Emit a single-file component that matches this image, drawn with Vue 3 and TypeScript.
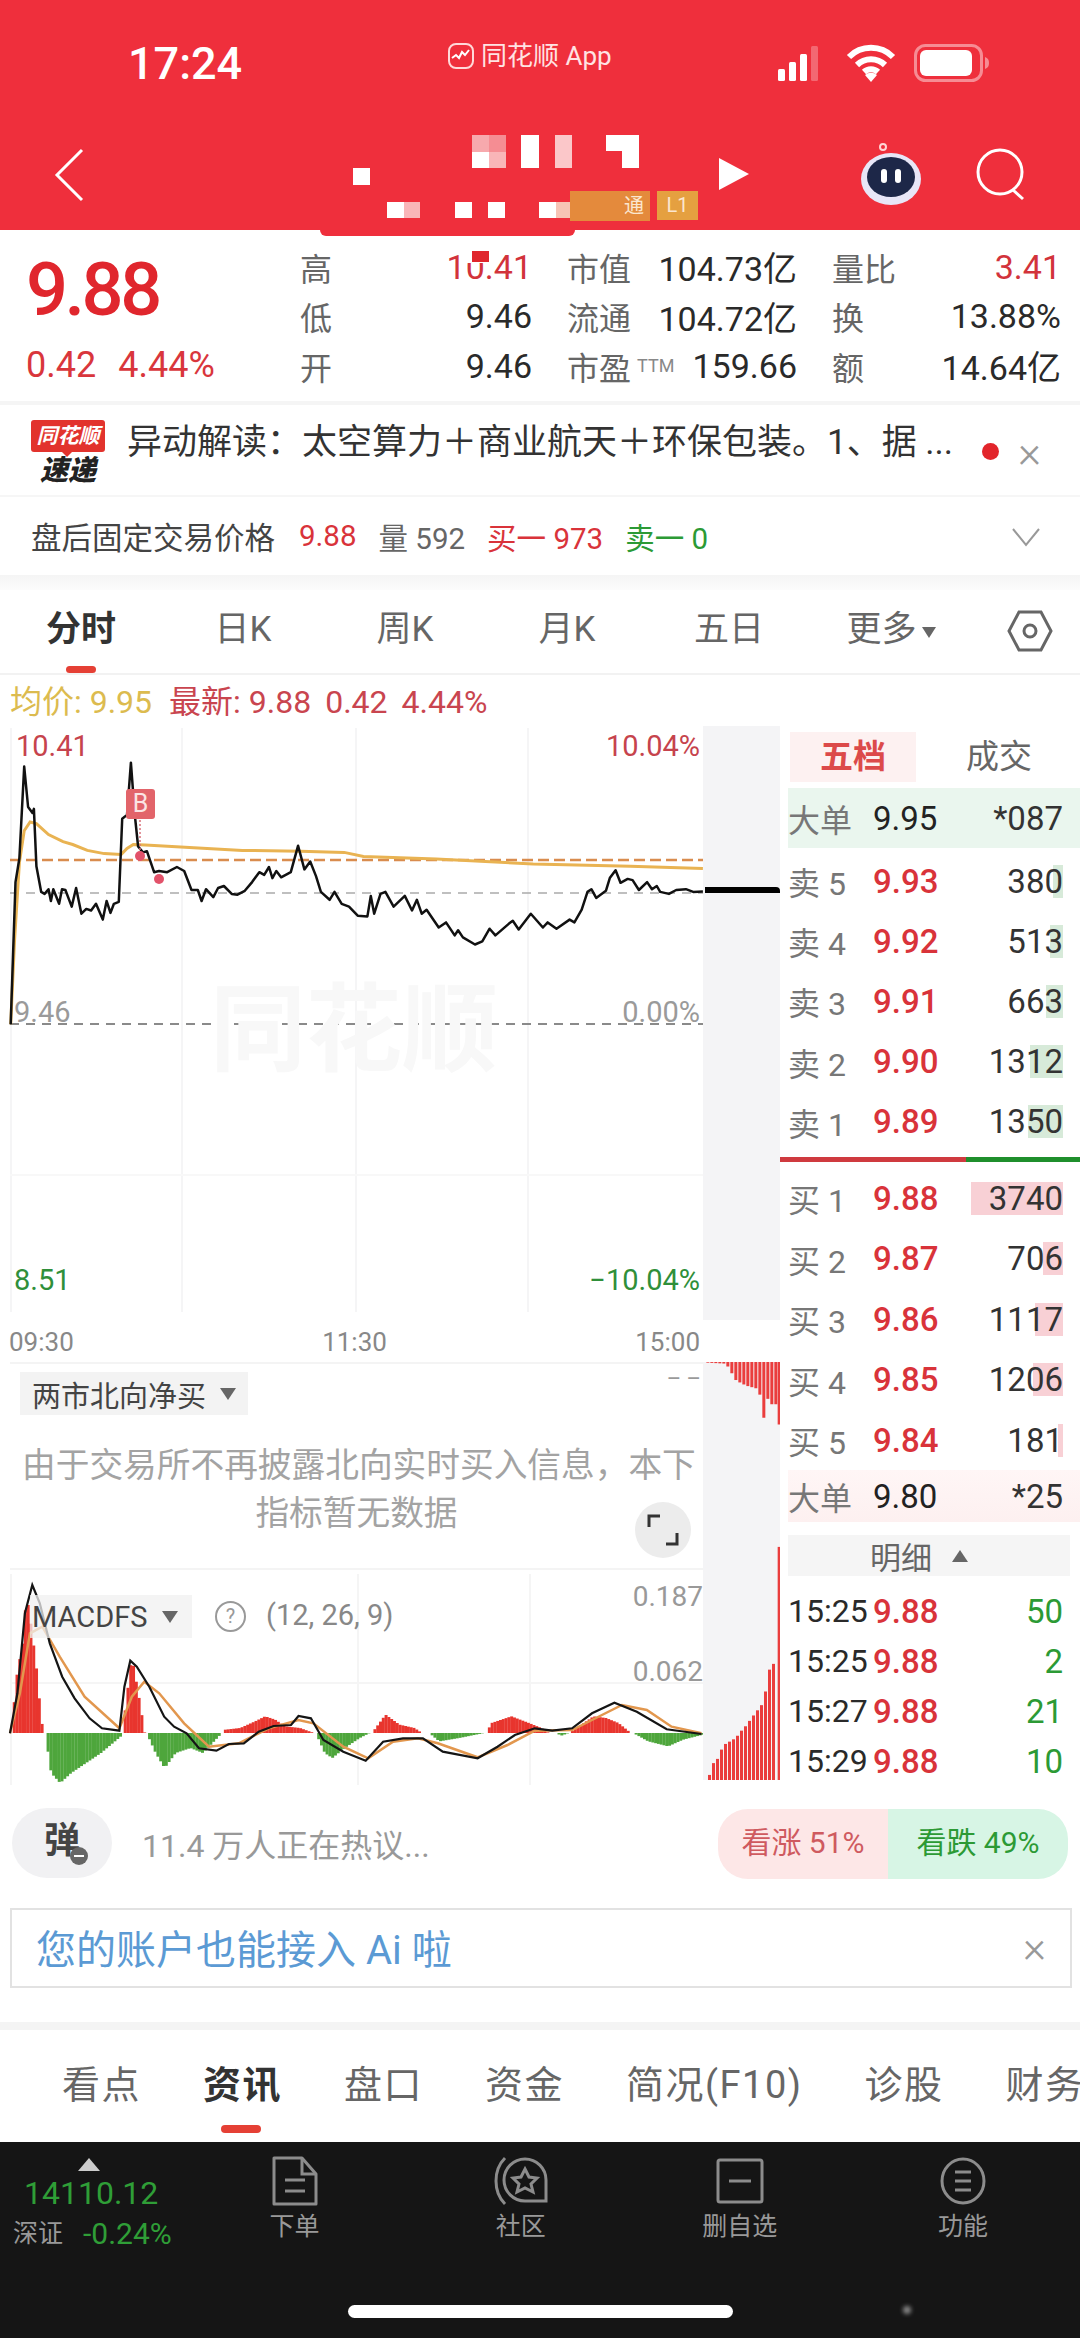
<template>
  <div class="app">
    <header class="top">
      <div class="status">
        <span class="clock">17:24</span>
        <span class="origin">
          <svg class="origin-icon" width="28" height="28" viewBox="0 0 28 28">
            <rect x="2" y="2" width="24" height="24" rx="7" fill="none" stroke="#ffd9d9" stroke-width="2" />
            <path d="M5 16l4-3 3 3 3-6 3 3 4-5" fill="none" stroke="#fff" stroke-width="2" />
          </svg>
          同花顺 App
        </span>
        <span class="status-icons">
          <svg width="50" height="36" viewBox="0 0 50 36">
            <rect x="0" y="24" width="7" height="12" rx="1.5" fill="#fff" />
            <rect x="11" y="17" width="7" height="19" rx="1.5" fill="#fff" />
            <rect x="22" y="9" width="7" height="27" rx="1.5" fill="#fff" />
            <rect x="33" y="1" width="7" height="35" rx="1.5" fill="#fff" opacity="0.28" />
          </svg>
          <svg width="50" height="38" viewBox="0 0 50 38">
            <path d="M3 13a31 31 0 0 1 44 0M11 21a20 20 0 0 1 28 0M18 28a10 10 0 0 1 14 0" fill="none" stroke="#fff" stroke-width="6" />
            <path d="M25 38l-6-7a9 9 0 0 1 12 0z" fill="#fff" />
          </svg>
          <svg width="76" height="38" viewBox="0 0 76 38">
            <rect x="1.5" y="1.5" width="66" height="35" rx="10" fill="none" stroke="#fff" stroke-opacity="0.45" stroke-width="3" />
            <rect x="6" y="6" width="52" height="26" rx="6" fill="#fff" />
            <path d="M71 13c3 1 4 3 4 6s-1 5-4 6z" fill="#fff" fill-opacity="0.45" />
          </svg>
        </span>
      </div>
      <div class="nav">
        <svg class="back" width="34" height="54" viewBox="0 0 34 54">
          <path d="M30 2L5 27l25 25" fill="none" stroke="#fff" stroke-width="3" />
        </svg>
        <svg class="mosaic" width="370" height="90" viewBox="0 0 370 90">
          <rect v-for="(b, i) in mosaic" :key="i" :x="b[0]" :y="b[1]" :width="b[2]" :height="b[3]" :fill="b[4]" />
        </svg>
        <span class="level-a">通</span>
        <span class="level-b">L1</span>
        <svg class="play" width="32" height="34" viewBox="0 0 32 34">
          <path d="M1 1l30 16L1 33z" fill="#fff" />
        </svg>
        <svg class="robot" width="66" height="66" viewBox="0 0 66 66">
          <circle cx="25" cy="5" r="3" fill="none" stroke="#ffd5d5" stroke-width="2" />
          <ellipse cx="33" cy="37" rx="30" ry="26" fill="#e8e6f7" />
          <ellipse cx="33" cy="35" rx="24" ry="20" fill="#1d2748" />
          <rect x="23" y="27" width="6" height="14" rx="3" fill="#fff" />
          <rect x="37" y="27" width="6" height="14" rx="3" fill="#fff" />
        </svg>
        <svg class="search" width="54" height="54" viewBox="0 0 54 54">
          <circle cx="25" cy="25" r="22" fill="none" stroke="#fff" stroke-width="3" />
          <path d="M38 43l10 9" stroke="#fff" stroke-width="3" />
        </svg>
      </div>
      <div class="notch"></div>
    </header>

    <section class="quote">
      <div class="price-box">
        <div class="big">9.88</div>
        <div class="change"><span>0.42</span><span>4.44%</span></div>
      </div>
      <div class="stats">
        <div v-for="s in stats" :key="s.label" class="stat">
          <span class="stat-label">{{ s.label }}<small v-if="s.tag">{{ s.tag }}</small></span>
          <span class="stat-value" :class="{ red: s.red, masked: s.masked }">{{ s.value }}</span>
        </div>
      </div>
    </section>

    <section class="notice">
      <div class="brand">
        <div class="bubble">同花顺</div>
        <div class="brand-sub">速递</div>
      </div>
      <p class="notice-text">异动解读：太空算力＋商业航天＋环保包装。1、据 ...</p>
      <i class="notice-dot"></i>
      <span class="close">×</span>
    </section>

    <section class="after-hours">
      <span class="ah-title">盘后固定交易价格</span>
      <span class="red">9.88</span>
      <span class="ah-gray">量 592</span>
      <span class="red">买一 973</span>
      <span class="green">卖一 0</span>
      <svg class="chevron" width="30" height="20" viewBox="0 0 30 20">
        <path d="M2 2l13 16L28 2" fill="none" stroke="#999" stroke-width="2" />
      </svg>
    </section>

    <div class="band"></div>

    <nav class="periods">
      <span v-for="(p, i) in periods" :key="p" class="period" :class="{ active: i === 0 }">
        {{ p }}<i v-if="p === '更多'" class="more-caret"></i>
      </span>
      <svg class="hex" width="46" height="42" viewBox="0 0 46 42">
        <path d="M12 2h22l10 19-10 19H12L2 21z" fill="none" stroke="#666" stroke-width="3" />
        <circle cx="23" cy="21" r="6" fill="none" stroke="#666" stroke-width="3" />
      </svg>
    </nav>

    <div class="avg-row">
      <span class="yellow">均价: 9.95</span>
      <span class="avg-red">最新: 9.88</span>
      <span class="avg-red">0.42</span>
      <span class="avg-red">4.44%</span>
    </div>

    <main class="main">
      <div class="charts">
        <div class="chart-row price-row">
          <div class="canvas">
            <svg width="703" height="600" viewBox="0 0 703 600">
              <line v-for="x in priceGrid" :key="x" :x1="x" :x2="x" y1="8" y2="592" stroke="#f5f5f6" stroke-width="2" />
              <line x1="10" x2="703" y1="455" y2="455" stroke="#f8f8f8" stroke-width="2" />
              <line x1="10" x2="703" y1="173" y2="173" stroke="#aaa" stroke-width="1.5" stroke-dasharray="9 7" />
              <line x1="10" x2="703" y1="304" y2="304" stroke="#8a8a8a" stroke-width="2" stroke-dasharray="9 7" />
              <line x1="10" x2="703" y1="140" y2="140" stroke="#d98c4e" stroke-width="2.5" stroke-dasharray="11 5" />
              <polyline :points="avgLine" fill="none" stroke="#e9b352" stroke-width="3" />
              <polyline :points="priceLine" fill="none" stroke="#111" stroke-width="2.5" stroke-linejoin="round" />
              <line x1="140" x2="140" y1="100" y2="135" stroke="#d9707a" stroke-width="1.5" stroke-dasharray="2 2" />
              <circle cx="140" cy="136" r="5" fill="#e2526a" />
              <circle cx="159" cy="159" r="5" fill="#e2526a" />
            </svg>
            <span class="watermark">同花顺</span>
            <span class="b-mark">B</span>
            <span class="lab tl red-soft">10.41</span>
            <span class="lab tr red-soft">10.04%</span>
            <span class="lab ml gray-soft">9.46</span>
            <span class="lab mr gray-soft">0.00%</span>
            <span class="lab bl green-soft">8.51</span>
            <span class="lab br green-soft">−10.04%</span>
          </div>
          <div class="strip">
            <i class="tick"></i>
          </div>
        </div>

        <div class="axis">
          <span>09:30</span><span>11:30</span><span>15:00</span>
        </div>

        <div class="chart-row lower">
          <div class="panels">
            <div class="north">
              <div class="tag">两市北向净买<i class="caret"></i></div>
              <span class="dash">– –</span>
              <p class="no-data first">由于交易所不再披露北向实时买入信息，本下</p>
              <p class="no-data">指标暂无数据</p>
              <span class="expand">
                <svg width="34" height="34" viewBox="0 0 34 34">
                  <path d="M3 14V3h11M31 20v11H20" fill="none" stroke="#333" stroke-width="3" />
                </svg>
              </span>
            </div>
            <div class="macd">
              <svg width="703" height="215" viewBox="0 0 703 215">
                <line v-for="x in macdGrid" :key="x" :x1="x" :x2="x" y1="4" y2="215" stroke="#f5f5f5" stroke-width="2" />
                <line x1="10" x2="703" y1="113" y2="113" stroke="#f5f5f5" stroke-width="2" />
                <rect
                  v-for="(b, i) in macdBars"
                  :key="i"
                  :x="b.x"
                  :y="b.y"
                  width="3"
                  :height="b.h"
                  :fill="b.up ? '#e8352e' : '#4ea63c'"
                />
                <polyline :points="macdSlow" fill="none" stroke="#e2974e" stroke-width="2.5" />
                <polyline :points="macdFast" fill="none" stroke="#151515" stroke-width="2.2" />
              </svg>
              <div class="tag macd-tag">MACDFS<i class="caret"></i></div>
              <span class="help">?</span>
              <span class="params">(12, 26, 9)</span>
              <span class="macd-num n1">0.187</span>
              <span class="macd-num n2">0.062</span>
            </div>
          </div>
          <div class="strip">
            <svg width="77" height="420" viewBox="0 0 77 420">
              <rect v-for="(b, i) in volBars" :key="i" :x="b.x" :y="b.y" width="3" :height="b.h" fill="#ea3d3d" />
            </svg>
          </div>
        </div>
      </div>

      <aside class="book">
        <div class="book-tabs">
          <span class="on">五档</span>
          <span>成交</span>
        </div>
        <div class="row big-row sell-big">
          <span class="r-label green">大单</span>
          <span class="r-price dark">9.95</span>
          <span class="r-vol">*087</span>
        </div>
        <div v-for="r in sells" :key="r.label" class="row">
          <span class="r-label">{{ r.label }}</span>
          <span class="r-price">{{ r.price }}</span>
          <span class="r-vol">
            <i class="vol-bar green-bar" :style="{ width: r.bar + 'px' }"></i>
            <b>{{ r.vol }}</b>
          </span>
        </div>
        <div class="split"></div>
        <div v-for="r in buys" :key="r.label" class="row buy">
          <span class="r-label">{{ r.label }}</span>
          <span class="r-price">{{ r.price }}</span>
          <span class="r-vol">
            <i class="vol-bar red-bar" :style="{ width: r.bar + 'px' }"></i>
            <b>{{ r.vol }}</b>
          </span>
        </div>
        <div class="row big-row buy-big">
          <span class="r-label red">大单</span>
          <span class="r-price dark">9.80</span>
          <span class="r-vol">*25</span>
        </div>
        <div class="detail-head">明细<i class="up-caret"></i></div>
        <div v-for="(d, i) in details" :key="i" class="detail">
          <span class="d-time">{{ d.time }}</span>
          <span class="r-price">9.88</span>
          <span class="r-vol green">{{ d.vol }}</span>
        </div>
      </aside>
    </main>

    <section class="talk">
      <div class="danmu">弹<i></i></div>
      <span class="talk-text">11.4 万人正在热议...</span>
      <div class="votes">
        <span class="vote up">看涨 51%</span>
        <span class="vote down">看跌 49%</span>
      </div>
    </section>

    <section class="ai">
      <span>您的账户也能接入 Ai 啦</span>
      <span class="close">×</span>
    </section>

    <div class="band low"></div>

    <nav class="info-tabs">
      <span v-for="(t, i) in infoTabs" :key="t" class="info-tab" :class="{ active: i === 1 }">{{ t }}</span>
    </nav>

    <footer class="bar">
      <div class="index">
        <i class="index-up"></i>
        <div class="index-num">14110.12</div>
        <div class="index-sub"><span>深证</span><em>-0.24%</em></div>
      </div>
      <div class="action">
        <svg width="46" height="50" viewBox="0 0 46 50">
          <path d="M2 2h28l14 16v30H2z" fill="none" stroke="#8c8c8c" stroke-width="3" stroke-linejoin="round" />
          <path d="M30 2v16h14M13 24h20M13 35h20" fill="none" stroke="#8c8c8c" stroke-width="3" />
        </svg>
        <span>下单</span>
      </div>
      <div class="action">
        <svg width="54" height="50" viewBox="0 0 54 50">
          <path d="M11 2C-1 14-1 36 11 48" fill="none" stroke="#8c8c8c" stroke-width="3" />
          <path d="M31 3a21 21 0 0 1 21 21v21H31a21 21 0 0 1 0-42z" fill="none" stroke="#8c8c8c" stroke-width="3" />
          <path d="M31 13l4 8 8 1-6 6 2 8-8-4-8 4 2-8-6-6 8-1z" fill="none" stroke="#8c8c8c" stroke-width="3" />
        </svg>
        <span>社区</span>
      </div>
      <div class="action">
        <svg width="48" height="46" viewBox="0 0 48 46">
          <rect x="2" y="2" width="44" height="42" rx="2" fill="none" stroke="#8c8c8c" stroke-width="3" />
          <path d="M13 23h22" stroke="#8c8c8c" stroke-width="3" />
        </svg>
        <span>删自选</span>
      </div>
      <div class="action">
        <svg width="46" height="48" viewBox="0 0 46 48">
          <ellipse cx="23" cy="24" rx="21" ry="22" fill="none" stroke="#8c8c8c" stroke-width="3" />
          <path d="M15 15h16M15 24h16M15 33h16" stroke="#8c8c8c" stroke-width="3" />
        </svg>
        <span>功能</span>
      </div>
      <i class="smudge"></i>
      <i class="home"></i>
    </footer>
  </div>
</template>

<script setup lang="ts">
type P = [number, number]

// coordinates read off the enlarged crops, scaled down when drawn
const toPrice = (a: P[]) => a.map(([x, y]) => `${(x / 2.063).toFixed(1)},${(y / 2.53).toFixed(1)}`).join(' ')
const toMacd = (a: P[]) => a.map(([x, y]) => `${(x / 2.01).toFixed(1)},${(y / 3 - 250).toFixed(1)}`).join(' ')

const priceLine = toPrice([
  [22, 770], [32, 410], [40, 350], [50, 118], [58, 220], [67, 235], [70, 225], [75, 370], [85, 435], [92, 440],
  [100, 428], [105, 458], [110, 428], [122, 465], [128, 428], [135, 430], [148, 472], [157, 425], [168, 490],
  [178, 478], [188, 482], [198, 465], [212, 505], [220, 458], [228, 488], [235, 465], [245, 460], [252, 250],
  [262, 240], [270, 108], [278, 240], [285, 320], [295, 335], [303, 332], [318, 385], [328, 382], [345, 385],
  [365, 372], [380, 382], [395, 430], [408, 430], [416, 458], [425, 428], [440, 448], [450, 425], [462, 420],
  [478, 440], [490, 442], [505, 432], [520, 410], [535, 385], [545, 392], [555, 372], [562, 400], [570, 382],
  [580, 398], [600, 385], [615, 318], [628, 378], [640, 358], [652, 395], [662, 435], [680, 455], [690, 435],
  [705, 465], [720, 472], [738, 495], [758, 497], [765, 445], [772, 490], [785, 440], [795, 435], [812, 472],
  [835, 445], [850, 482], [860, 455], [870, 490], [880, 480], [905, 525], [920, 512], [938, 545], [945, 532],
  [955, 550], [980, 568], [995, 560], [1010, 528], [1022, 545], [1050, 515], [1058, 508], [1070, 530], [1095, 490],
  [1120, 525], [1130, 512], [1148, 528], [1175, 505], [1185, 512], [1200, 480], [1212, 435], [1220, 428], [1230, 450],
  [1250, 432], [1258, 400], [1270, 380], [1280, 412], [1295, 402], [1305, 405], [1318, 430], [1335, 410], [1345, 428],
  [1355, 420], [1362, 435], [1380, 440], [1395, 430], [1415, 428], [1430, 435], [1450, 434]
])

const avgLine = toPrice([
  [22, 770], [30, 560], [40, 360], [50, 280], [62, 258], [75, 262], [100, 290], [130, 308], [150, 315], [180, 330],
  [215, 338], [250, 340], [262, 325], [275, 315], [300, 316], [400, 323], [500, 330], [620, 332], [710, 335],
  [750, 345], [900, 352], [1100, 364], [1300, 370], [1450, 376]
])

const macdFast = toMacd([
  [20, 1240], [35, 1120], [50, 880], [65, 795], [80, 850], [100, 970], [125, 1070], [150, 1135], [180, 1195],
  [205, 1225], [240, 1232], [250, 1100], [262, 1022], [275, 1040], [300, 1100], [330, 1190], [350, 1220], [375, 1240],
  [400, 1285], [435, 1292], [460, 1272], [490, 1270], [520, 1235], [550, 1218], [585, 1215], [600, 1188], [625, 1195],
  [650, 1260], [690, 1295], [735, 1322], [770, 1265], [810, 1255], [850, 1255], [890, 1295], [960, 1315], [1000, 1280],
  [1035, 1245], [1075, 1225], [1110, 1232], [1150, 1225], [1190, 1180], [1235, 1148], [1280, 1175], [1340, 1228], [1410, 1242]
])

const macdSlow = toMacd([
  [20, 1240], [40, 1120], [60, 940], [85, 920], [120, 1010], [170, 1130], [240, 1225], [265, 1130], [290, 1085],
  [320, 1120], [370, 1210], [420, 1280], [480, 1270], [540, 1225], [600, 1200], [630, 1210], [690, 1280], [740, 1315],
  [790, 1265], [840, 1255], [880, 1270], [960, 1312], [1020, 1275], [1075, 1232], [1150, 1230], [1190, 1200],
  [1250, 1155], [1300, 1170], [1350, 1220], [1410, 1240]
])

function lerp(env: P[], step: number): P[] {
  const out: P[] = []
  for (let x = env[0][0]; x <= env[env.length - 1][0]; x += step) {
    const i = Math.max(env.findIndex(p => p[0] >= x), 1)
    const [x0, y0] = env[i - 1]
    const [x1, y1] = env[i]
    out.push([x, y0 + ((y1 - y0) * (x - x0)) / (x1 - x0 || 1)])
  }
  return out
}

const macdEnv: P[][] = [
  [[20, 0], [30, 165], [45, 290], [50, 420], [60, 320], [70, 200], [80, 40], [85, 0]],
  [[88, 0], [100, -120], [118, -150], [140, -120], [170, -90], [200, -60], [240, -10]],
  [[243, 0], [262, 230], [275, 120], [288, 0]],
  [[292, 0], [310, -60], [328, -105], [350, -60], [380, -45], [405, -60], [440, -5]],
  [[450, 10], [480, 15], [510, 35], [530, 50], [550, 40], [570, 20], [600, 15], [628, 0]],
  [[632, 0], [650, -60], [665, -75], [690, -45], [720, -15], [740, 0]],
  [[745, 0], [772, 55], [800, 25], [830, 15], [845, 0]],
  [[860, 0], [880, -25], [920, -15], [970, 0]],
  [[975, 0], [985, 30], [1025, 50], [1060, 30], [1085, 15], [1100, 0]],
  [[1115, 0], [1125, -8], [1140, 0]],
  [[1142, 0], [1190, 50], [1215, 45], [1240, 30], [1265, 0]],
  [[1270, 0], [1300, -25], [1340, -40], [1370, -20], [1410, -5]]
]

const macdBars = macdEnv.flatMap(env =>
  lerp(env, 5.6).map(([x, v]) => {
    const h = Math.abs(v) / 3
    return { x: x / 2.01, y: v > 0 ? 163 - h : 163, h, up: v > 0 }
  })
)

// strip bars: the top group hangs from the edge, the bottom group stands on it
const hanging: P[] = [
  ...lerp([[80, 2], [135, 5], [150, 30], [165, 55], [195, 70], [225, 78], [238, 100], [241, 165], [254, 165], [257, 105], [272, 125], [288, 125]], 12),
  [294, 185]
]
const standing: P[] = [
  ...lerp([[85, 15], [97, 50], [108, 60], [118, 85], [130, 105], [165, 125], [175, 140], [190, 155], [205, 175], [220, 195], [240, 220], [250, 235], [260, 325], [275, 330], [283, 385]], 12),
  [294, 690]
]
const volBars = [
  ...hanging.map(([x, h]) => ({ x: (x - 70) / 3, y: 0, h: h / 2.96 })),
  ...standing.map(([x, h]) => ({ x: (x - 70) / 3, y: 418 - h / 2.96, h: h / 2.96 }))
]

const priceGrid = [11, 182, 356, 528]
const macdGrid = [11, 358, 530]

const mosaic: [number, number, number, number, string][] = [
  [124, 0, 17, 17, '#f7a9ad'], [141, 0, 17, 17, '#f58d93'], [124, 17, 17, 16, '#fff'], [141, 17, 17, 16, '#f9b5b8'],
  [173, 0, 18, 33, '#fff'], [207, 0, 17, 33, '#fbc7c9'], [258, 0, 33, 16, '#fff'], [274, 16, 17, 17, '#fff'],
  [5, 33, 17, 17, '#fff'], [39, 67, 17, 16, '#fff'], [56, 67, 16, 16, '#f9b5b8'], [107, 67, 17, 16, '#fff'],
  [140, 67, 17, 16, '#fff'], [191, 67, 17, 16, '#fff'], [208, 67, 16, 16, '#f7c3b5']
]

const stats = [
  { label: '高', value: '10.41', red: true, masked: true },
  { label: '市值', value: '104.73亿' },
  { label: '量比', value: '3.41', red: true },
  { label: '低', value: '9.46' },
  { label: '流通', value: '104.72亿' },
  { label: '换', value: '13.88%' },
  { label: '开', value: '9.46' },
  { label: '市盈', tag: 'TTM', value: '159.66' },
  { label: '额', value: '14.64亿' }
]

const periods = ['分时', '日K', '周K', '月K', '五日', '更多']

const sells = [
  { label: '卖 5', price: '9.93', vol: '380', bar: 10 },
  { label: '卖 4', price: '9.92', vol: '513', bar: 13 },
  { label: '卖 3', price: '9.91', vol: '663', bar: 17 },
  { label: '卖 2', price: '9.90', vol: '1312', bar: 33 },
  { label: '卖 1', price: '9.89', vol: '1350', bar: 35 }
]

const buys = [
  { label: '买 1', price: '9.88', vol: '3740', bar: 92 },
  { label: '买 2', price: '9.87', vol: '706', bar: 20 },
  { label: '买 3', price: '9.86', vol: '1117', bar: 28 },
  { label: '买 4', price: '9.85', vol: '1206', bar: 30 },
  { label: '买 5', price: '9.84', vol: '181', bar: 5 }
]

const details = [
  { time: '15:25', vol: '50' },
  { time: '15:25', vol: '2' },
  { time: '15:27', vol: '21' },
  { time: '15:29', vol: '10' }
]

const infoTabs = ['看点', '资讯', '盘口', '资金', '简况(F10)', '诊股', '财务']
</script>

<style>
html,
body {
  margin: 0;
  background: #fff;
}
</style>

<style scoped>
.app {
  width: 1080px;
  height: 2338px;
  overflow: hidden;
  background: #fff;
  color: #333;
  font-family: Roboto, "Noto Sans CJK SC", sans-serif;
}

.top {
  position: relative;
  height: 230px;
  background: #ef2f3c;
  color: #fff;
}

.status {
  position: relative;
  height: 120px;
}

.clock {
  position: absolute;
  left: 128px;
  top: 37px;
  font-size: 45px;
  font-weight: 500;
  line-height: 54px;
}

.origin {
  position: absolute;
  left: 447px;
  top: 38px;
  display: flex;
  align-items: center;
  gap: 6px;
  font-size: 26px;
  line-height: 36px;
  color: #ffe3e3;
}

.status-icons {
  position: absolute;
  left: 778px;
  top: 44px;
  display: flex;
  align-items: center;
  gap: 18px;
}

.nav {
  position: relative;
  height: 110px;
}

.back {
  position: absolute;
  left: 52px;
  top: 28px;
}

.mosaic {
  position: absolute;
  left: 348px;
  top: 15px;
}

.level-a {
  position: absolute;
  left: 570px;
  top: 71px;
  width: 80px;
  height: 30px;
  padding-right: 6px;
  box-sizing: border-box;
  background: #e48a3c;
  color: #fbe6cf;
  font-size: 20px;
  line-height: 30px;
  text-align: right;
}

.level-b {
  position: absolute;
  left: 657px;
  top: 71px;
  width: 41px;
  height: 29px;
  background: #e5a040;
  color: #fbe6cf;
  font-size: 20px;
  line-height: 29px;
  text-align: center;
}

.play {
  position: absolute;
  left: 718px;
  top: 37px;
}

.robot {
  position: absolute;
  left: 858px;
  top: 22px;
}

.search {
  position: absolute;
  left: 975px;
  top: 27px;
}

.notch {
  position: absolute;
  left: 320px;
  top: 230px;
  width: 255px;
  height: 6px;
  background: #ef2f3c;
  border-radius: 0 0 6px 6px;
}

.quote {
  display: flex;
  height: 175px;
  box-sizing: border-box;
  border-bottom: 4px solid #f5f5f5;
}

.price-box {
  width: 300px;
  padding-left: 26px;
  box-sizing: border-box;
  color: #e0262d;
}

.big {
  margin-top: 20px;
  font-size: 74px;
  font-weight: 500;
  line-height: 80px;
  letter-spacing: -3.5px;
}

.change {
  display: flex;
  gap: 22px;
  margin-top: 15px;
  font-size: 36px;
  line-height: 40px;
  color: #d9363c;
}

.stats {
  display: grid;
  grid-template-columns: 232px 230px 229px;
  grid-auto-rows: 49.5px;
  column-gap: 35px;
  padding-top: 12px;
}

.stat {
  display: flex;
  align-items: center;
  justify-content: space-between;
}

.stat-label {
  font-size: 32px;
  color: #666;
}

.stat-label small {
  margin-left: 6px;
  vertical-align: 8px;
  font-size: 18px;
  color: #888;
}

.stat-value {
  position: relative;
  font-size: 34px;
  color: #2a2a2a;
}

.stat-value.red {
  color: #d2333b;
}

/* the smear left on the day high in the reference */
.stat-value.masked::before {
  content: "";
  position: absolute;
  left: 14px;
  top: 6px;
  width: 25px;
  height: 10px;
  background: #fff;
}

.stat-value.masked::after {
  content: "";
  position: absolute;
  left: 25px;
  top: 4px;
  width: 17px;
  height: 11px;
  background: #e0262d;
}

.red {
  color: #d9333a;
}

.green {
  color: #2c9a35;
}

.notice {
  display: flex;
  align-items: flex-start;
  height: 92px;
  padding-left: 31px;
  box-sizing: border-box;
  position: relative;
  border-bottom: 2px solid #f6f6f6;
}

.brand {
  width: 74px;
  margin-top: 15px;
}

.bubble {
  position: relative;
  height: 32px;
  background: #e2332d;
  border-radius: 3px;
  color: #fff;
  font-size: 21px;
  font-style: italic;
  font-weight: 700;
  line-height: 32px;
  text-align: center;
}

.bubble::after {
  content: "";
  position: absolute;
  left: 30px;
  bottom: -5px;
  border-top: 6px solid #e2332d;
  border-left: 6px solid transparent;
  border-right: 6px solid transparent;
}

.brand-sub {
  margin-top: 3px;
  color: #222;
  font-size: 28px;
  font-style: italic;
  font-weight: 900;
  line-height: 32px;
  text-align: center;
}

.notice-text {
  margin: 16px 0 0 22px;
  font-size: 35px;
  line-height: 44px;
  color: #333;
  white-space: nowrap;
}

.notice-dot {
  position: absolute;
  left: 982px;
  top: 38px;
  width: 17px;
  height: 17px;
  border-radius: 50%;
  background: #e2252b;
}

.close {
  color: #999;
  font-size: 44px;
  font-weight: 300;
  line-height: 44px;
}

.notice .close {
  position: absolute;
  left: 1018px;
  top: 25px;
}

.after-hours {
  position: relative;
  display: flex;
  align-items: center;
  gap: 22px;
  height: 78px;
  padding-left: 31px;
  box-sizing: border-box;
  font-size: 29.5px;
}

.ah-title {
  font-size: 30.5px;
  margin-right: 2px;
  color: #444;
}

.ah-gray {
  color: #666;
}

.chevron {
  position: absolute;
  left: 1011px;
  top: 30px;
}

.band {
  height: 15px;
  background: linear-gradient(#f5f5f5, #fcfcfc);
}

.band.low {
  height: 8px;
  margin-top: 34px;
  background: #f4f4f4;
}

.periods {
  position: relative;
  display: flex;
  height: 85px;
  box-sizing: border-box;
  border-bottom: 2px solid #f2f2f2;
}

.period {
  position: relative;
  width: 162px;
  text-align: center;
  font-size: 35px;
  line-height: 80px;
  color: #666;
}

.period.active {
  color: #333;
  font-weight: 700;
}

.period.active::after {
  content: "";
  position: absolute;
  left: 66px;
  bottom: 0;
  width: 30px;
  height: 7px;
  border-radius: 4px;
  background: #e54035;
}

.more-caret {
  display: inline-block;
  margin-left: 5px;
  vertical-align: 3px;
  border-top: 11px solid #666;
  border-left: 7px solid transparent;
  border-right: 7px solid transparent;
}

.hex {
  position: absolute;
  left: 1007px;
  top: 20px;
}

.avg-row {
  display: flex;
  gap: 14px;
  height: 45px;
  padding: 7px 0 0 10px;
  box-sizing: border-box;
  font-size: 32px;
  line-height: 40px;
}

.yellow {
  color: #dcbb4f;
  margin-right: 3px;
}

.avg-red {
  color: #c9454f;
}

.main {
  display: flex;
  height: 1065px;
}

.charts {
  width: 780px;
  height: 1060px;
}

.chart-row {
  display: flex;
}

.price-row {
  height: 600px;
}

.canvas {
  position: relative;
  width: 703px;
}

.strip {
  width: 77px;
  background: #f4f4f6;
  position: relative;
}

.price-row .strip {
  margin-top: 6px;
}

.tick {
  position: absolute;
  left: 2px;
  top: 161px;
  width: 75px;
  height: 6px;
  background: #000;
  border-radius: 0 4px 0 0;
}

.watermark {
  position: absolute;
  left: 210px;
  top: 250px;
  font-size: 96px;
  font-weight: 700;
  line-height: 120px;
  color: #f8f8f8;
}

.b-mark {
  position: absolute;
  left: 126px;
  top: 69px;
  width: 29px;
  height: 30px;
  border-radius: 3px;
  background: #e2646a;
  color: #fbe4e4;
  font-size: 25px;
  line-height: 30px;
  text-align: center;
}

.lab {
  position: absolute;
  font-size: 29px;
  line-height: 36px;
}

.tl { left: 16px; top: 8px; }
.tr { right: 3px; top: 8px; }
.ml { left: 14px; top: 274px; }
.mr { right: 3px; top: 274px; }
.bl { left: 14px; top: 542px; }
.br { right: 3px; top: 542px; }

.red-soft { color: #c6434d; }
.gray-soft { color: #9a9a9a; }
.green-soft { color: #2f8f3a; }

.axis {
  display: flex;
  justify-content: space-between;
  width: 703px;
  height: 42px;
  padding: 0 3px 0 9px;
  box-sizing: border-box;
  font-size: 26px;
  line-height: 44px;
  color: #888;
}

.lower {
  height: 418px;
}

.panels {
  width: 703px;
}

.north {
  position: relative;
  height: 208px;
  box-sizing: border-box;
  border: solid #f4f4f4;
  border-width: 2px 0;
  margin-left: 10px;
}

.tag {
  display: inline-flex;
  align-items: center;
  height: 43px;
  padding: 0 12px;
  background: #f3f3f3;
  color: #444;
  font-size: 29px;
}

.north .tag {
  margin: 8px 0 0 10px;
}

.caret {
  margin-left: 14px;
  border-top: 12px solid #666;
  border-left: 8px solid transparent;
  border-right: 8px solid transparent;
}

.dash {
  position: absolute;
  right: 2px;
  top: 2px;
  color: #999;
  font-size: 22px;
}

.no-data {
  margin: 0;
  font-size: 33.7px;
  line-height: 48px;
  color: #a3a3a3;
  text-align: center;
  white-space: nowrap;
}

.no-data.first {
  margin: 27px 0 0 12px;
  text-align: left;
}

.expand {
  position: absolute;
  left: 625px;
  top: 138px;
  display: flex;
  align-items: center;
  justify-content: center;
  width: 56px;
  height: 56px;
  border-radius: 50%;
  background: #ececec;
}

.macd {
  position: relative;
  height: 210px;
}

.macd svg {
  display: block;
}

.macd-tag {
  position: absolute;
  left: 30px;
  top: 25px;
  height: 43px;
  padding: 0 14px 0 2px;
  background: rgba(240, 240, 240, 0.75);
}

.help {
  position: absolute;
  left: 215px;
  top: 31px;
  width: 27px;
  height: 27px;
  border: 2px solid #999;
  border-radius: 50%;
  color: #999;
  font-size: 20px;
  line-height: 27px;
  text-align: center;
}

.params {
  position: absolute;
  left: 266px;
  top: 27px;
  color: #888;
  font-size: 29px;
  line-height: 36px;
}

.macd-num {
  position: absolute;
  right: 0;
  color: #999;
  font-size: 28px;
  line-height: 36px;
}

.n1 { top: 9px; }
.n2 { top: 84px; }

.book {
  width: 300px;
  padding-left: 8px;
  box-sizing: border-box;
}

.book-tabs {
  display: flex;
  height: 68px;
  font-size: 33px;
  line-height: 74px;
  color: #666;
}

.book-tabs span {
  flex: none;
  width: 126px;
  margin-right: 20px;
  text-align: center;
}

.book-tabs .on {
  height: 50px;
  margin-top: 12px;
  line-height: 50px;
  margin-left: 2px;
  background: #fdf1f1;
  color: #dc4a4a;
  font-weight: 700;
}

.row,
.detail {
  display: flex;
  align-items: center;
  height: 60.2px;
  font-size: 33px;
}

.big-row.sell-big {
  height: 60px;
  margin-bottom: 3px;
  background: #eaf6ee;
}

.big-row.buy-big {
  height: 52px;
  background: linear-gradient(#fff6f6, #fdf0f0);
}

.row.buy {
  height: 60.5px;
}

.r-label {
  width: 85px;
  color: #777;
  font-size: 32px;
  white-space: nowrap;
}

.r-price {
  width: 95px;
  color: #d9333a;
  font-weight: 500;
}

.r-price.dark {
  color: #222;
  font-weight: 400;
}

.r-vol {
  position: relative;
  flex: 1;
  padding-right: 17px;
  text-align: right;
  color: #333;
}

.r-vol b {
  position: relative;
  font-weight: 400;
}

.r-vol.green {
  color: #2c9a35;
}

.vol-bar {
  position: absolute;
  right: 17px;
  top: 3px;
  height: 33px;
}

.green-bar {
  background: #d7ead9;
}

.red-bar {
  background: #f8d0d5;
}

.split {
  height: 5px;
  margin: 5px 0 6px -8px;
  background: linear-gradient(90deg, #cf3a3f 62%, #1f8f2c 62%);
}

.detail-head {
  display: flex;
  align-items: center;
  justify-content: center;
  height: 41px;
  margin: 13px 10px 10px 0;
  padding-right: 20px;
  background: #f5f5f5;
  color: #666;
  font-size: 31px;
}

.up-caret {
  margin-left: 20px;
  border-bottom: 12px solid #666;
  border-left: 8px solid transparent;
  border-right: 8px solid transparent;
}

.detail {
  height: 50px;
}

.d-time {
  width: 85px;
  color: #2a2a2a;
  font-size: 32px;
  white-space: nowrap;
}

.talk {
  display: flex;
  align-items: center;
  height: 115px;
  padding: 0 12px 0 12px;
  box-sizing: border-box;
}

.danmu {
  position: relative;
  width: 100px;
  height: 70px;
  border-radius: 35px;
  background: #f1f1f3;
  color: #444;
  font-size: 36px;
  font-weight: 700;
  line-height: 66px;
  text-align: center;
}

.danmu i {
  position: absolute;
  left: 58px;
  top: 39px;
  width: 18px;
  height: 18px;
  border-radius: 50%;
  background: #666;
}

.danmu i::after {
  content: "";
  position: absolute;
  left: 4px;
  top: 8px;
  width: 10px;
  height: 2px;
  background: #fff;
}

.talk-text {
  margin-left: 30px;
  color: #999;
  font-size: 32px;
}

.votes {
  display: flex;
  margin-left: auto;
  margin-top: 2px;
}

.vote {
  height: 70px;
  font-size: 30px;
  line-height: 68px;
  text-align: center;
}

.vote.up {
  width: 170px;
  border-radius: 30px 0 0 30px;
  background: #fde7e7;
  color: #cf5a5f;
}

.vote.down {
  width: 180px;
  border-radius: 0 30px 30px 0;
  background: #d7f5e5;
  color: #2c9a35;
}

.ai {
  display: flex;
  align-items: center;
  justify-content: space-between;
  width: 1062px;
  height: 80px;
  margin: 8px 0 0 10px;
  padding: 0 24px 3px;
  box-sizing: border-box;
  border: 2px solid #e2e2e2;
  color: #5b9ad4;
  font-size: 40px;
}

.info-tabs {
  display: flex;
  gap: 62px;
  height: 112px;
  padding-left: 62px;
  box-sizing: border-box;
  white-space: nowrap;
}

.info-tab {
  position: relative;
  color: #666;
  font-size: 38px;
  line-height: 110px;
  letter-spacing: 1.5px;
}

.info-tab.active {
  color: #333;
  font-weight: 700;
}

.info-tab.active::after {
  content: "";
  position: absolute;
  left: 18px;
  bottom: 9px;
  width: 40px;
  height: 8px;
  border-radius: 4px;
  background: #e54035;
}

.bar {
  position: relative;
  display: flex;
  height: 196px;
  padding-top: 14px;
  box-sizing: border-box;
  background: #151515;
}

.index {
  position: relative;
  width: 183px;
  padding-left: 13px;
  box-sizing: border-box;
}

.index-up {
  position: absolute;
  left: 78px;
  top: 2px;
  border-bottom: 13px solid #ccc;
  border-left: 11px solid transparent;
  border-right: 11px solid transparent;
}

.index-num {
  margin: 15px 0 0 11px;
  color: #2f9e37;
  font-size: 32px;
  line-height: 44px;
}

.index-sub {
  display: flex;
  align-items: center;
  gap: 20px;
  color: #999;
  font-size: 25px;
  line-height: 38px;
}

.index-sub em {
  color: #2f9e37;
  font-size: 30px;
  font-style: normal;
}

.action {
  display: flex;
  flex-direction: column;
  align-items: center;
  width: 228px;
  color: #999;
  font-size: 25px;
}

.action:nth-child(4) {
  width: 214px;
}

.action:nth-child(5) {
  width: 236px;
}

.action svg {
  height: 50px;
}

.action span {
  margin-top: 3px;
  line-height: 36px;
}

.smudge {
  position: absolute;
  left: 903px;
  top: 164px;
  width: 8px;
  height: 8px;
  border-radius: 50%;
  background: #8a8a8a;
  filter: blur(2px);
}

.home {
  position: absolute;
  left: 348px;
  top: 163px;
  width: 385px;
  height: 13px;
  border-radius: 7px;
  background: #fff;
}
</style>
